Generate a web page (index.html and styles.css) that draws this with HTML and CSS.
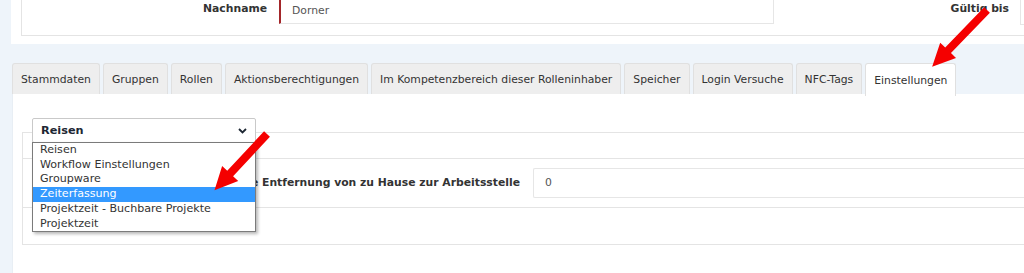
FILE: index.html
```html
<!DOCTYPE html>
<html lang="de">
<head>
<meta charset="utf-8">
<title>Benutzer – Einstellungen</title>
<link rel="stylesheet" href="styles.css">
</head>
<body>
<div class="page">
  <div class="card-top">
    <div class="box">
      <div class="field field-name">
        <label class="lbl lbl-name">Nachname</label>
        <div class="input input-req">Dorner</div>
      </div>
      <div class="field field-valid">
        <label class="lbl lbl-valid">Gültig bis</label>
        <div class="input input-date"></div>
      </div>
    </div>
  </div>

  <div class="tabs">
    <div class="tab">Stammdaten</div>
    <div class="tab">Gruppen</div>
    <div class="tab">Rollen</div>
    <div class="tab">Aktionsberechtigungen</div>
    <div class="tab">Im Kompetenzbereich dieser Rolleninhaber</div>
    <div class="tab">Speicher</div>
    <div class="tab">Login Versuche</div>
    <div class="tab">NFC-Tags</div>
    <div class="tab active">Einstellungen</div>
  </div>

  <div class="panel">
    <div class="settings">
      <div class="select-wrap">
        <div class="select">
          <span>Reisen</span>
          <svg class="chev" width="9" height="6" viewBox="0 0 9 6"><polyline points="1,1 4.5,4.5 8,1" fill="none" stroke="#1d2733" stroke-width="1.8"/></svg>
        </div>
        <ul class="options">
          <li>Reisen</li>
          <li>Workflow Einstellungen</li>
          <li>Groupware</li>
          <li class="hl">Zeiterfassung</li>
          <li>Projektzeit - Buchbare Projekte</li>
          <li>Projektzeit</li>
        </ul>
      </div>
      <div class="group">
        <div class="row">
          <label class="lbl row-lbl">Durchschnittliche Entfernung von zu Hause zur Arbeitsstelle</label>
          <div class="input input-num">0</div>
        </div>
      </div>
    </div>
  </div>

  <svg class="arrows" width="1024" height="273" viewBox="0 0 1024 273">
    <g transform="translate(987 10) rotate(134)">
      <polygon points="0,-4 56,-4 56,-11 79,0 56,11 56,4 0,4" fill="#f50000"/>
    </g>
    <g transform="translate(267 134) rotate(133)">
      <polygon points="0,-4 54,-4 54,-11 77,0 54,11 54,4 0,4" fill="#f50000"/>
    </g>
  </svg>
</div>
</body>
</html>
```

FILE: styles.css
```css
html, body {
  margin: 0;
  padding: 0;
}
body {
  background: #eef4fa;
  font-family: "DejaVu Sans", Verdana, sans-serif;
  font-size: 10.8px;
  color: #333;
  overflow: hidden;
}
.page {
  position: relative;
  width: 1024px;
  height: 273px;
  overflow: hidden;
}

/* top card */
.card-top {
  margin-top: -6px;
  margin-left: 11px;
  background: #fff;
  padding: 0 0 8px 10px;
}
.box {
  display: flex;
  border-left: 1px solid #e4e4e4;
  border-bottom: 1px solid #e4e4e4;
  padding-bottom: 10px;
}
.field {
  display: flex;
  align-items: flex-start;
}
.lbl {
  font-weight: bold;
  color: #333;
  text-align: right;
}
.lbl-name {
  width: 245px;
  padding-top: 6px;
  line-height: 18px;
  margin-right: 12px;
}
.input {
  box-sizing: border-box;
  background: #fff;
  border: 1px solid #e6e6e6;
  color: #555;
}
.input-req {
  width: 495px;
  height: 30px;
  border-left: 2px solid #a3262a;
  padding: 6px 12px 0 11px;
  line-height: 20px;
}
.field-valid {
  flex: 1;
}
.lbl-valid {
  width: 235px;
  padding-top: 6px;
  line-height: 18px;
  margin-right: 11px;
}
.input-date {
  flex: 1;
  height: 31px;
  border-right: 0;
}

/* tabs */
.tabs {
  display: flex;
  align-items: flex-start;
  gap: 3px;
  margin: 19px 0 0 12px;
  height: 31px;
  position: relative;
  z-index: 2;
}
.tab {
  box-sizing: border-box;
  height: 31px;
  padding: 1px 8px 0;
  line-height: 29px;
  background: #eeeeee;
  border: 1px solid #e0e0e0;
  border-bottom: 0;
  border-radius: 3px 3px 0 0;
  color: #333;
  white-space: nowrap;
}
.tab.active {
  background: #fff;
  height: 33px;
  line-height: 31px;
}

/* panel */
.panel {
  position: relative;
  z-index: 1;
  margin-left: 12px;
  background: #fff;
  border-left: 1px solid #e8eef4;
  height: 200px;
  padding: 24px 0 0 9px;
}
.select-wrap {
  position: relative;
  z-index: 3;
  width: 224px;
  margin-left: 10px;
}
.select {
  box-sizing: border-box;
  height: 25px;
  border: 1px solid #c9c9c9;
  border-radius: 2px;
  background: #fff;
  padding: 0 8px;
  display: flex;
  align-items: center;
  justify-content: space-between;
  font-weight: bold;
  font-size: 11.3px;
  color: #1d2733;
  line-height: 23px;
}
.chev {
  display: block;
}
.options {
  position: absolute;
  left: 0;
  top: 24px;
  box-sizing: border-box;
  width: 224px;
  margin: 0;
  padding: 0;
  list-style: none;
  background: #fff;
  border: 1px solid #7b7b7b;
  box-shadow: 2px 2px 3px rgba(0, 0, 0, 0.28);
}
.options li {
  padding-left: 7px;
  font-size: 11.1px;
  line-height: 14.7px;
  color: #333;
  white-space: nowrap;
}
.options li.hl {
  background: #3399ff;
  color: #fff;
}

.group {
  margin-top: -11px;
  border: 1px solid #e4e4e4;
  border-right: 0;
  padding: 25px 0 36px;
}
.row {
  display: flex;
  align-items: center;
  border-top: 1px solid #e4e4e4;
  border-bottom: 1px solid #e4e4e4;
  padding: 9px 0;
}
.row-lbl {
  width: 497px;
  flex: none;
  white-space: nowrap;
  margin-right: 13px;
  line-height: 30px;
}
.input-num {
  flex: 1;
  height: 30px;
  border-right: 0;
  border-radius: 2px 0 0 2px;
  padding-left: 11px;
  line-height: 28px;
}

/* annotation arrows */
.arrows {
  position: absolute;
  left: 0;
  top: 0;
  z-index: 10;
  pointer-events: none;
}
```
